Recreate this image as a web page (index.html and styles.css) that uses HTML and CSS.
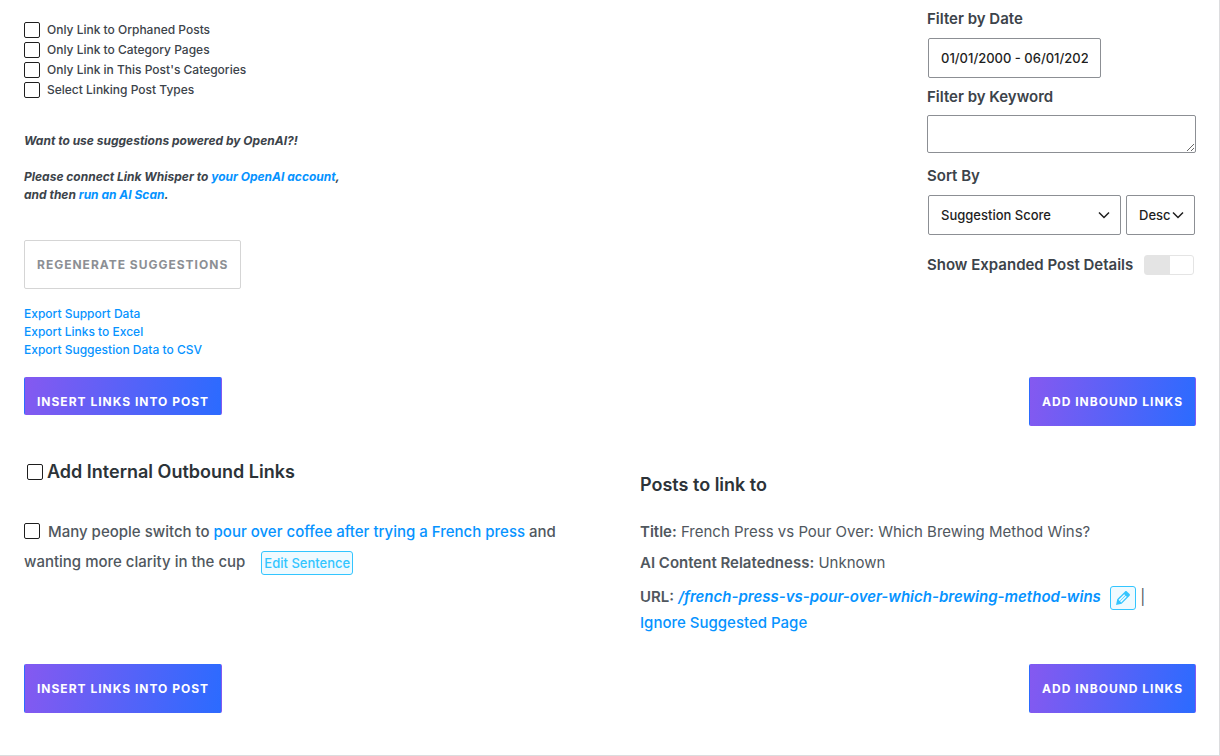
FILE: index.html
```html
<!DOCTYPE html>
<html lang="en">
<head>
  <meta charset="UTF-8" />
  <meta name="viewport" content="width=device-width, initial-scale=1.0" />
  <title>Link Whisper - Suggested Links</title>
  <link rel="stylesheet" href="styles.css">
</head>
<body>
  <form class="panel">
    <div class="top">
      <div class="options">
        <ul class="checks">
          <li><input type="checkbox" id="orphaned"><label for="orphaned">Only Link to Orphaned Posts</label></li>
          <li><input type="checkbox" id="category-pages"><label for="category-pages">Only Link to Category Pages</label></li>
          <li><input type="checkbox" id="same-category"><label for="same-category">Only Link in This Post's Categories</label></li>
          <li><input type="checkbox" id="post-types"><label for="post-types">Select Linking Post Types</label></li>
        </ul>

        <div class="openai">
          <p>Want to use suggestions powered by OpenAI?!</p>
          <p>Please connect Link Whisper to <a href="#">your OpenAI account</a>,<br>and then <a href="#">run an AI Scan</a>.</p>
        </div>

        <button type="button" class="btn btn-outline">Regenerate Suggestions</button>

        <div class="exports">
          <a href="#">Export Support Data</a>
          <a href="#">Export Links to Excel</a>
          <a href="#">Export Suggestion Data to CSV</a>
        </div>
      </div>

      <div class="filters">
        <label class="filter-label" for="date">Filter by Date</label>
        <input type="text" id="date" class="field date" value="01/01/2000 - 06/01/202">
        <label class="filter-label" for="keyword">Filter by Keyword</label>
        <textarea id="keyword" class="keyword"></textarea>
        <label class="filter-label" for="sort">Sort By</label>
        <div class="sort">
          <select id="sort" class="field sort-by"><option>Suggestion Score</option></select>
          <select class="field sort-dir" aria-label="Sort direction"><option>Desc</option><option>Asc</option></select>
        </div>
        <div class="expanded">
          <label for="expanded">Show Expanded Post Details</label>
          <input type="checkbox" id="expanded" class="toggle">
        </div>
      </div>
    </div>

    <div class="actions actions-top">
      <button type="button" class="btn btn-primary btn-short">Insert Links Into Post</button>
      <button type="button" class="btn btn-primary">Add Inbound Links</button>
    </div>

    <div class="suggestions">
      <div class="col">
        <h2 class="outbound"><input type="checkbox" id="all"><label for="all">Add Internal Outbound Links</label></h2>
        <div class="sentence">
          <input type="checkbox" id="sentence"><label for="sentence">Many people switch to <a href="#">pour over coffee after trying a French press</a> and wanting more clarity in the cup</label>
          <button type="button" class="edit">Edit Sentence</button>
        </div>
      </div>

      <div class="col">
        <h2 class="posts">Posts to link to</h2>
        <div class="post">
          <p><b>Title:</b> French Press vs Pour Over: Which Brewing Method Wins?</p>
          <p><b>AI Content Relatedness:</b> Unknown</p>
          <p class="url"><b>URL:</b> <a href="#" class="slug">/french-press-vs-pour-over-which-brewing-method-wins</a>
            <button type="button" class="edit edit-icon" aria-label="Edit URL">
              <svg viewBox="0 0 20 20" width="20" height="20" fill="currentColor"><path d="M13.89 3.39l2.71 2.72c.46.46.42 1.24.03 1.64l-8.01 8.02-5.56 1.16 1.16-5.58s7.6-7.63 7.99-8.03c.39-.39 1.22-.39 1.68.07zm-2.73 2.79l-5.59 5.61 1.11 1.11 5.54-5.65zm-2.97 8.23l5.58-5.6-1.07-1.08-5.59 5.6z"/></svg>
            </button> |<br><a href="#">Ignore Suggested Page</a></p>
        </div>
      </div>
    </div>

    <div class="actions">
      <button type="button" class="btn btn-primary">Insert Links Into Post</button>
      <button type="button" class="btn btn-primary">Add Inbound Links</button>
    </div>
  </form>
</body>
</html>
```
FILE: styles.css
```css
* {
  margin: 0;
  padding: 0;
  box-sizing: border-box;
}
body {
  font-family: Inter, "Liberation Sans", sans-serif;
  font-size: 12px;
  line-height: 18px;
  color: #3c434a;
  background: #fff;
}
a {
  color: #0693ff;
  text-decoration: none;
}
button, input, select, textarea {
  font-family: inherit;
}
.panel {
  padding: 8px 23px 42px 24px;
  border-right: 1px solid #dcdcde;
  border-bottom: 1px solid #dcdcde;
}
input[type="checkbox"] {
  appearance: none;
  flex: none;
  width: 16px;
  height: 16px;
  border: 1px solid #1e1e1e;
  border-radius: 2px;
  background: #fff;
}

/* options and filters */
.top {
  display: flex;
  justify-content: space-between;
}
.options {
  padding-top: 12px;
}
.checks {
  list-style: none;
  font-weight: 500;
}
.checks li {
  display: flex;
  align-items: center;
  gap: 7px;
  height: 20px;
}
.openai {
  margin-top: 32px;
  font-style: italic;
  font-weight: 700;
}
.openai p + p {
  margin-top: 18px;
}
.btn {
  height: 49px;
  padding: 0 12px;
  border: 1px solid transparent;
  border-radius: 2px;
  font-size: 12px;
  font-weight: 700;
  line-height: 47px;
  letter-spacing: 1px;
  text-transform: uppercase;
  cursor: pointer;
}
.btn-outline {
  margin-top: 36px;
  border-color: #d5d5d5;
  background: #fff;
  color: #8c8f94;
}
.btn-primary {
  background: linear-gradient(100deg, #8559f0, #2b6bff);
  color: #fff;
}
.btn-short {
  height: 38px;
  padding-top: 11px;
  line-height: 25px;
}
.exports {
  display: flex;
  flex-direction: column;
  margin-top: 16px;
  font-weight: 500;
}
.filters {
  width: 269px;
}
.filter-label {
  display: block;
  font-size: 15px;
  font-weight: 600;
  line-height: 22px;
}
.field {
  height: 40px;
  padding: 0 12px;
  border: 1px solid #8c8f94;
  border-radius: 2px;
  background: #fff;
  color: #1e1e1e;
  font-size: 13px;
  font-weight: 500;
}
.date {
  display: block;
  width: 173px;
  margin: 8px 1px;
}
.keyword {
  display: block;
  width: 100%;
  height: 38px;
  margin: 7px 0 12px;
  border: 1px solid #8c8f94;
  border-radius: 2px;
}
.sort {
  display: flex;
  gap: 5px;
  margin: 8px 1px 0;
}
select.field {
  appearance: none;
  background: #fff url("data:image/svg+xml,%3Csvg xmlns='http://www.w3.org/2000/svg' width='12' height='8' viewBox='0 0 12 8'%3E%3Cpath d='M1 1.5l5 5 5-5' fill='none' stroke='%231e1e1e' stroke-width='1.5'/%3E%3C/svg%3E") no-repeat right 10px center;
}
.sort-by {
  flex: 1;
}
.sort-dir {
  width: 69px;
}
.expanded {
  display: flex;
  align-items: center;
  justify-content: space-between;
  margin: 19px 2px 0 0;
  font-size: 15px;
  font-weight: 600;
  line-height: 22px;
}
input[type="checkbox"].toggle {
  width: 50px;
  height: 20px;
  border: 1px solid #e4e4e4;
  border-radius: 3px;
  background: linear-gradient(#e4e4e4, #e4e4e4) no-repeat 0 0 / 25px 100%;
}

/* action buttons */
.actions {
  display: flex;
  align-items: flex-start;
  justify-content: space-between;
}
.actions-top {
  margin-top: 18px;
}

/* suggestion list */
.suggestions {
  display: grid;
  grid-template-columns: 1fr 1fr;
  column-gap: 60px;
  min-height: 238px;
  color: #50575e;
  font-size: 15px;
  font-weight: 500;
  line-height: 30px;
}
h2 {
  color: #2c3338;
  font-size: 18px;
  font-weight: 600;
  line-height: 24px;
}
.outbound {
  display: flex;
  align-items: center;
  gap: 4px;
  margin: 34px 0 33px 3px;
}
.sentence input {
  margin-right: 8px;
  vertical-align: -2px;
}
.edit {
  height: 24px;
  margin-left: 12px;
  padding: 0 2px;
  border: 1px solid #33c5ff;
  border-radius: 3px;
  background: #effaff;
  color: #33c5ff;
  font-size: 13px;
  font-weight: 500;
  vertical-align: middle;
}
.posts {
  margin: 47px 0 19px;
}
.post {
  line-height: 31px;
}
.post p {
  font-weight: 400;
}
.post b {
  font-weight: 600;
}
.post .url {
  margin-top: 6px;
  line-height: 25px;
}
.url a {
  font-weight: 500;
}
.url .slug {
  font-style: italic;
  font-weight: 600;
}
.edit-icon {
  margin-left: 5px;
}
.edit-icon svg {
  display: block;
}
```
